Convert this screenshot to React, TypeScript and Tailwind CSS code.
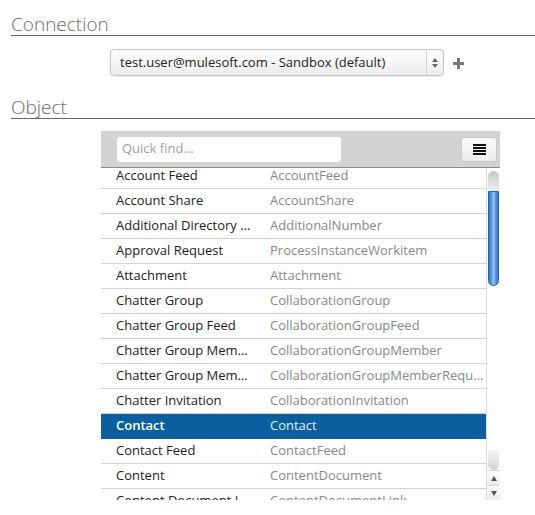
import React from "react";

const rows: [string, string][] = [
  ["Account Feed", "AccountFeed"],
  ["Account Share", "AccountShare"],
  ["Additional Directory …", "AdditionalNumber"],
  ["Approval Request", "ProcessInstanceWorkitem"],
  ["Attachment", "Attachment"],
  ["Chatter Group", "CollaborationGroup"],
  ["Chatter Group Feed", "CollaborationGroupFeed"],
  ["Chatter Group Mem…", "CollaborationGroupMember"],
  ["Chatter Group Mem…", "CollaborationGroupMemberRequ…"],
  ["Chatter Invitation", "CollaborationInvitation"],
  ["Contact", "Contact"],
  ["Contact Feed", "ContactFeed"],
  ["Content", "ContentDocument"],
  ["Content Document L", "ContentDocumentLink"],
  ["Content Version", "ContentVersion"],
];

export default function App() {
  return (
    <div
      className="w-[535px] h-[515px] bg-white overflow-hidden pl-[11px]"
      style={{ fontFamily: '"Open Sans", "Liberation Sans", sans-serif' }}
    >
      <div className="mt-[11px] text-[19px] leading-[24px] pt-[1px] h-[25px] text-[#6b6b6b] border-b border-[#6a6a6a] font-light">
        Connection
      </div>
      <div className="mt-[13px] flex items-center">
        <div className="ml-[99px] w-[334px] h-[27px] rounded-[4px] border border-[#c4c4c4] bg-gradient-to-b from-white to-[#ececec] flex items-center shadow-[0_1px_1px_rgba(0,0,0,0.08)]">
          <div className="flex-1 pl-[9px] text-[13px] text-[#222] truncate">
            test.user@mulesoft.com - Sandbox (default)
          </div>
          <div className="w-[17px] h-full border-l border-[#d4d4d4] flex flex-col items-center justify-center gap-[2px]">
            <svg width="6" height="4" viewBox="0 0 6 4"><path d="M3 0L6 4H0Z" fill="#666" /></svg>
            <svg width="6" height="4" viewBox="0 0 6 4"><path d="M0 0H6L3 4Z" fill="#666" /></svg>
          </div>
        </div>
        <div className="ml-[9px] mt-[1px]">
          <svg width="11" height="11" viewBox="0 0 11 11">
            <rect x="4" y="0" width="3" height="11" fill="#777" />
            <rect x="0" y="4" width="11" height="3" fill="#777" />
          </svg>
        </div>
      </div>
      <div className="mt-[18px] text-[19px] leading-[24px] pt-[1px] h-[25px] text-[#6b6b6b] border-b border-[#6a6a6a] font-light">
        Object
      </div>
      <div className="mt-[12px] ml-[90px] w-[399px]">
        <div className="h-[37px] bg-[#d3d3d3] border-b border-[#8a8a8a] flex items-center pl-[16px] pr-[3px]">
          <div className="w-[224px] h-[25px] bg-white rounded-[3px] flex items-center pl-[5px] text-[13px] text-[#a0a0a0]">
            Quick find...
          </div>
          <div className="ml-auto w-[36px] h-[25px] rounded-[3px] bg-gradient-to-b from-[#fafafa] to-[#ececec] border border-[#c8c8c8] flex items-center justify-center">
            <svg width="13" height="11" viewBox="0 0 13 11">
              <rect x="0" y="0" width="13" height="2" fill="#111" />
              <rect x="0" y="3" width="13" height="2" fill="#111" />
              <rect x="0" y="6" width="13" height="2" fill="#111" />
              <rect x="0" y="9" width="13" height="2" fill="#111" />
            </svg>
          </div>
        </div>
        <div className="h-[332px] flex overflow-hidden">
          <div className="flex-1 overflow-hidden">
            <div className="-mt-[4px]">
              {rows.map(([a, b], i) => {
                const sel = a === "Contact";
                return (
                  <div
                    key={i}
                    className={
                      "h-[25px] flex items-center text-[13px] border-b " +
                      (sel ? "bg-[#0a5f9e] border-[#0a5f9e]" : "border-[#d2d2d2]")
                    }
                  >
                    <div
                      className={
                        "w-[169px] shrink-0 pl-[15px] whitespace-nowrap overflow-hidden " +
                        (sel ? "text-white font-semibold" : "text-[#222]")
                      }
                    >
                      {a}
                    </div>
                    <div
                      className={
                        "flex-1 whitespace-nowrap overflow-hidden " +
                        (sel ? "text-[#e3ebf5]" : "text-[#888]")
                      }
                    >
                      {b}
                    </div>
                  </div>
                );
              })}
            </div>
          </div>
          <div className="w-[14px] border-l border-[#dcdcdc] bg-white flex flex-col">
            <div className="mt-[3px] mx-[1px] h-[20px] rounded-t-full bg-gradient-to-b from-[#c8c8c8] to-[#eeeeee]" />
            <div className="mx-[1px] h-[95px] rounded-b-full bg-gradient-to-r from-[#2d6fc8] via-[#8fc0f5] to-[#2d6fc8] border border-[#2a62b0]" />
            <div className="flex-1" />
            <div className="mx-[1px] h-[20px] rounded-b-full bg-gradient-to-b from-[#f4f4f4] to-[#d4d4d4]" />
            <div className="h-[15px] border-t border-[#d8d8d8] bg-gradient-to-b from-white to-[#ededed] flex items-center justify-center">
              <svg width="6" height="5" viewBox="0 0 6 5"><path d="M3 0L6 5H0Z" fill="#555" /></svg>
            </div>
            <div className="h-[15px] border-t border-[#d8d8d8] bg-gradient-to-b from-white to-[#ededed] flex items-center justify-center">
              <svg width="6" height="5" viewBox="0 0 6 5"><path d="M0 0H6L3 5Z" fill="#555" /></svg>
            </div>
          </div>
        </div>
      </div>
    </div>
  );
}
